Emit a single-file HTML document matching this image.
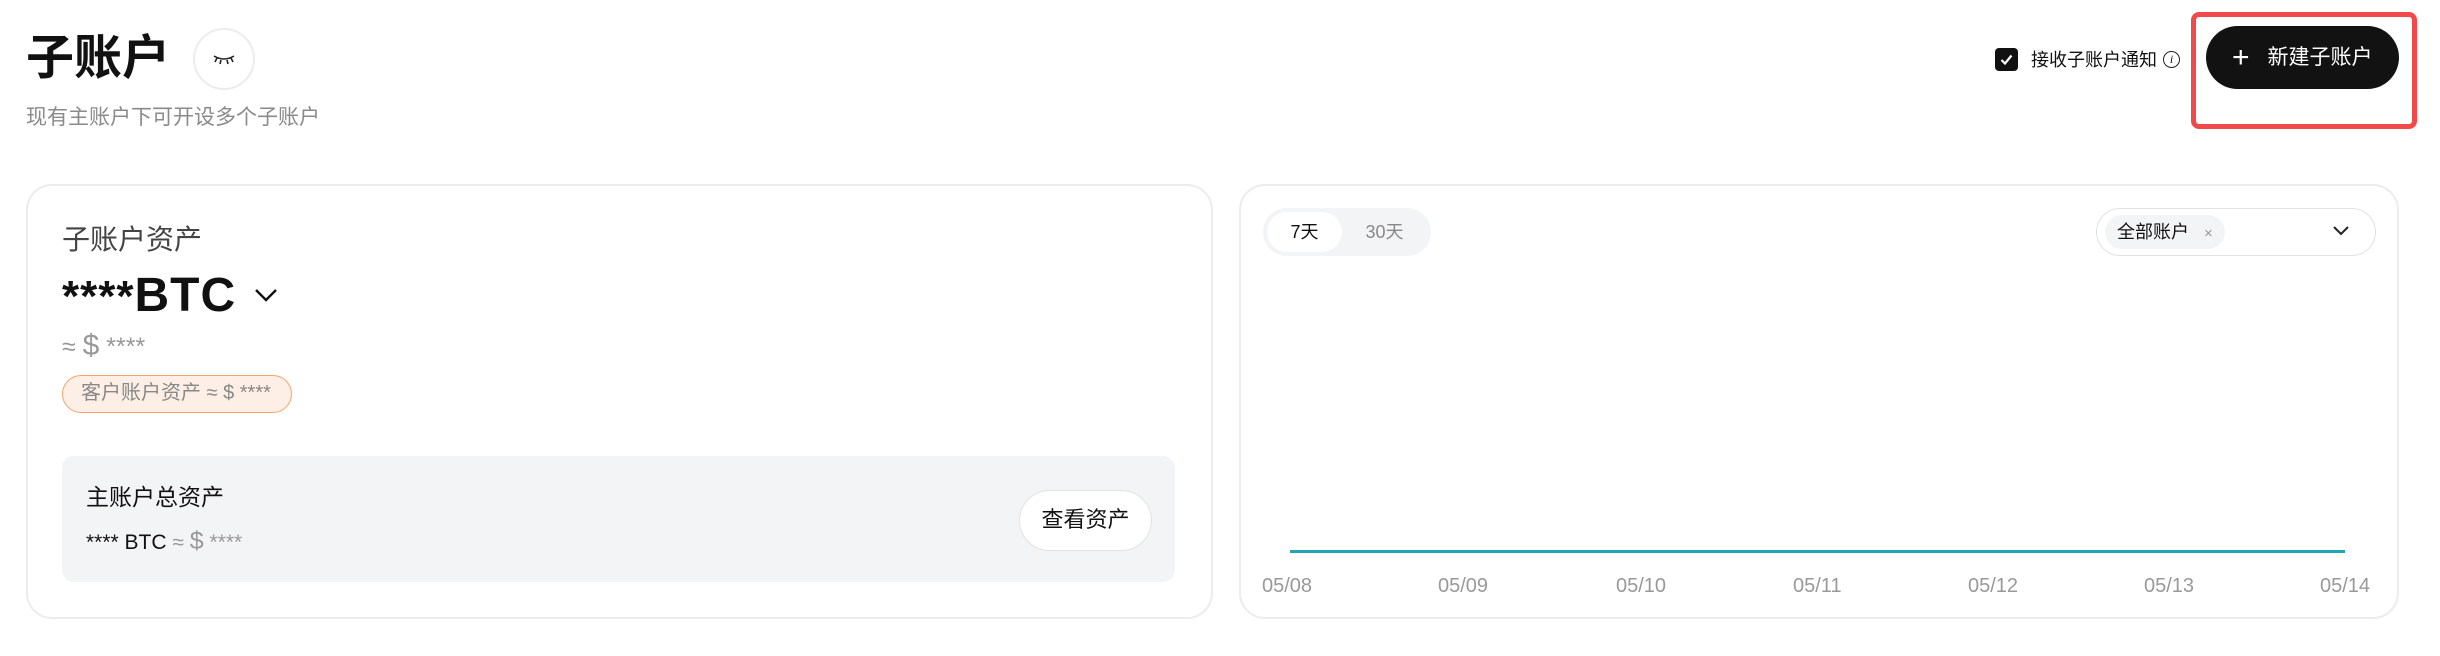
<!DOCTYPE html>
<html><head><meta charset="utf-8"><style>
*{box-sizing:border-box;margin:0;padding:0}
body{width:2440px;height:656px;background:#fff;font-family:"Liberation Sans","Noto Sans CJK SC",sans-serif;position:relative;overflow:hidden;color:#111}
.a{position:absolute;white-space:nowrap}
.card{position:absolute;border:2px solid #ececec;border-radius:26px;background:#fff}
</style></head><body>
<div class="a" style="left:26px;top:28px;font-size:48px;font-weight:700;line-height:62px">子账户</div>
<div class="a" style="left:193px;top:28px;width:62px;height:62px;border:2px solid #ececec;border-radius:50%"></div>
<svg class="a" style="left:212px;top:50px" width="24" height="18" viewBox="0 0 24 18"><path d="M2 6 Q12 12 22 6 M5 8 L3 12 M9 10 L8 14 M15 10 L16 14 M19 8 L21 12" stroke="#222" stroke-width="1.6" fill="none"/></svg>
<div class="a" style="left:26px;top:105px;font-size:21px;color:#8a8a8a;line-height:26px">现有主账户下可开设多个子账户</div>

<div class="a" style="left:1995px;top:48px;width:23px;height:23px;background:#111;border-radius:4px"></div>
<svg class="a" style="left:1998px;top:51px" width="17" height="17" viewBox="0 0 17 17"><path d="M3.5 9 L7 12.5 L13.5 4.5" stroke="#fff" stroke-width="2.2" fill="none"/></svg>
<div class="a" style="left:2031px;top:47px;font-size:18px;line-height:26px">接收子账户通知</div>
<div class="a" style="left:2163px;top:51px;width:17px;height:17px;border:1.5px solid #222;border-radius:50%;font-size:12px;line-height:14px;text-align:center;font-style:italic;font-family:'Liberation Serif',serif">i</div>
<div class="a" style="left:2191px;top:12px;width:226px;height:117px;border:5px solid #f24a4a;border-radius:8px"></div>
<div class="a" style="left:2206px;top:26px;width:193px;height:63px;background:#121212;border-radius:32px;color:#fff;font-size:21px;line-height:63px;padding-left:26px"><span style="font-size:30px;font-weight:300;vertical-align:-3px;margin-right:18px">+</span>新建子账户</div>

<div class="card" style="left:26px;top:184px;width:1187px;height:435px"></div>
<div class="a" style="left:62px;top:222px;font-size:28px;color:#444;line-height:36px">子账户资产</div>
<div class="a" style="left:62px;top:270px;font-size:44px;font-weight:700;line-height:52px;letter-spacing:1px">****<span style="font-size:48px">BTC</span></div>
<svg class="a" style="left:254px;top:287px" width="24" height="16" viewBox="0 0 24 16"><path d="M2 3 L12 13 L22 3" stroke="#111" stroke-width="2.4" fill="none"/></svg>
<div class="a" style="left:62px;top:330px;font-size:25px;color:#999;line-height:32px">≈ <span style="font-size:30px">$</span> ****</div>
<div class="a" style="left:62px;top:375px;width:230px;height:38px;border:1.5px solid #f6a46e;background:#fdeee6;border-radius:19px;font-size:20px;color:#888;line-height:35px;padding-left:18px">客户账户资产 ≈ $ ****</div>
<div class="a" style="left:62px;top:456px;width:1113px;height:126px;background:#f3f4f5;border-radius:12px"></div>
<div class="a" style="left:86px;top:482px;font-size:23px;line-height:30px">主账户总资产</div>
<div class="a" style="left:86px;top:527px;font-size:21px;line-height:28px">**** BTC <span style="color:#999">≈ <span style="font-size:25px">$</span> ****</span></div>
<div class="a" style="left:1019px;top:490px;width:133px;height:61px;background:#fff;border:1.5px solid #e2e2e2;border-radius:31px;font-size:22px;line-height:58px;text-align:center">查看资产</div>

<div class="card" style="left:1239px;top:184px;width:1160px;height:435px"></div>
<div class="a" style="left:1263px;top:208px;width:168px;height:48px;background:#f3f4f5;border-radius:24px"></div>
<div class="a" style="left:1267px;top:212px;width:75px;height:40px;background:#fff;border-radius:20px;font-size:18px;line-height:40px;text-align:center">7天</div>
<div class="a" style="left:1342px;top:212px;width:85px;height:40px;font-size:18px;line-height:40px;text-align:center;color:#888">30天</div>
<div class="a" style="left:2096px;top:208px;width:280px;height:48px;border:1.5px solid #e2e2e2;border-radius:24px"></div>
<div class="a" style="left:2105px;top:215px;width:120px;height:34px;background:#f3f4f5;border-radius:17px;font-size:18px;line-height:34px;padding-left:12px">全部账户 <span style="color:#999;font-size:15px;margin-left:10px">×</span></div>
<svg class="a" style="left:2332px;top:225px" width="18" height="12" viewBox="0 0 18 12"><path d="M2 2 L9 9 L16 2" stroke="#222" stroke-width="2" fill="none"/></svg>
<div class="a" style="left:1290px;top:550px;width:1055px;height:3px;background:#24a3b4"></div>
<div class="a" style="left:1262px;top:574px;width:1110px;font-size:20px;color:#999;line-height:24px">
<span class="a" style="left:0">05/08</span><span class="a" style="left:176px">05/09</span><span class="a" style="left:354px">05/10</span><span class="a" style="left:531px">05/11</span><span class="a" style="left:706px">05/12</span><span class="a" style="left:882px">05/13</span><span class="a" style="left:1058px">05/14</span></div>
</body></html>
